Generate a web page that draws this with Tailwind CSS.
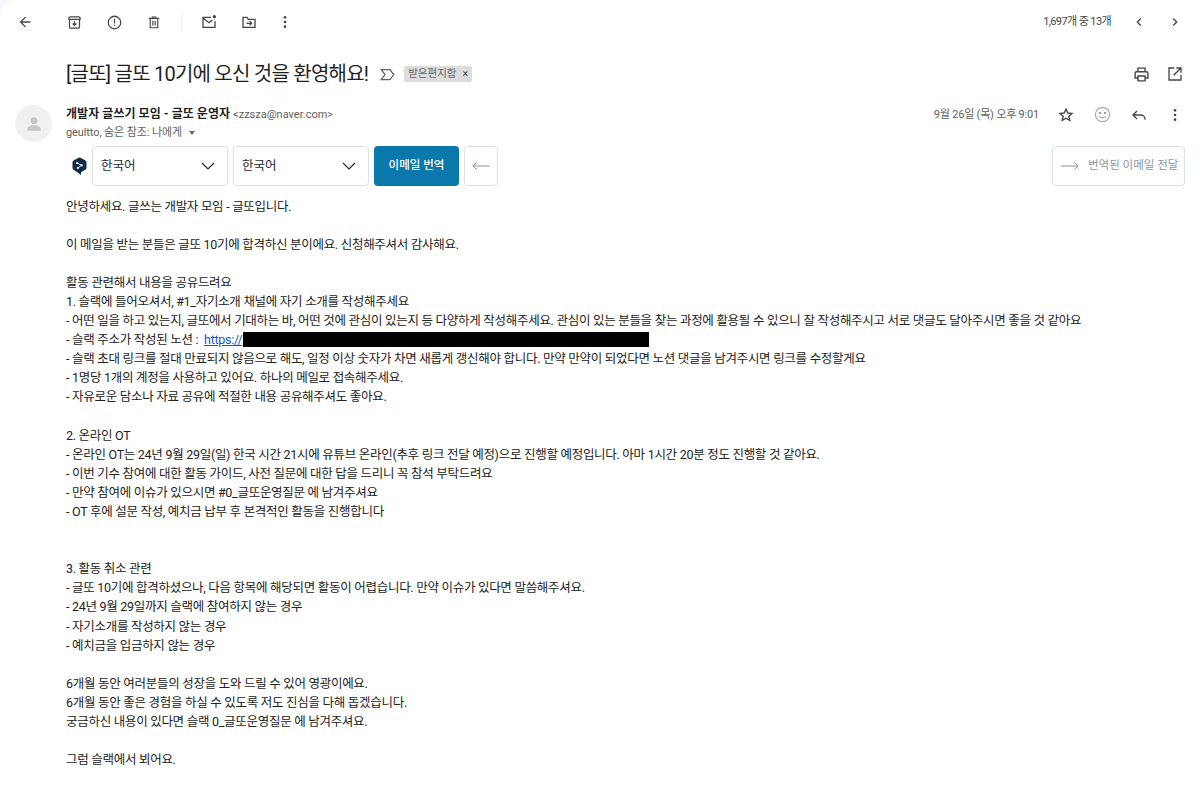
<!DOCTYPE html>
<html lang="ko">
<head>
  <meta charset="UTF-8">
  <meta name="viewport" content="width=device-width, initial-scale=1.0">
  <title>Gmail</title>
  <script src="https://cdn.jsdelivr.net/npm/@tailwindcss/browser@4"></script>
</head>
<body class="bg-[#f6f8fc] overflow-hidden font-['Roboto','Noto_Sans_CJK_KR',sans-serif]">
  <div class="bg-white w-[1200px] h-[789px] rounded-tl-2xl overflow-hidden">

    <!-- Toolbar -->
    <div class="h-[44px] flex items-center text-[#444746]">
      <svg class="ml-[17px] w-[16px] h-[16px]" viewBox="0 0 24 24" fill="#444746"><path d="M20 11H7.830l5.590-5.590L12 4l-8 8 8 8 1.410-1.410L7.830 13H20v-2z"/></svg>
      <svg class="ml-[34px] w-[15px] h-[15px]" viewBox="0 0 24 24" fill="none" stroke="#444746" stroke-width="2"><path d="M3 8V5a2 2 0 0 1 2-2h14a2 2 0 0 1 2 2v3M4 7h16v12a2 2 0 0 1-2 2H6a2 2 0 0 1-2-2z"/><path d="M12 10v6M9 13.500l3 3 3-3"/></svg>
      <svg class="ml-[25px] w-[15px] h-[15px]" viewBox="0 0 24 24" fill="none" stroke="#444746" stroke-width="2"><circle cx="12" cy="12" r="10"/><path d="M12 6.500v7M12 15.500v2"/></svg>
      <svg class="ml-[25px] w-[14px] h-[15px]" viewBox="0 0 24 24" fill="none" stroke="#444746" stroke-width="2"><path d="M3 5h18M9 5V2.500h6V5M5.500 5v16h13V5M10 9v8M14 9v8"/></svg>
      <div class="ml-[20px] w-px h-[20px] bg-[#eceeef]"></div>
      <svg class="ml-[19px] w-[16px] h-[16px]" viewBox="0 0 24 24" fill="none" stroke="#444746" stroke-width="2"><path d="M15 5H3v15h18v-9M3 6l9 7 5-4"/><circle cx="20" cy="4" r="2.500" fill="#444746" stroke="none"/></svg>
      <svg class="ml-[24px] w-[16px] h-[16px]" viewBox="0 0 24 24" fill="none" stroke="#444746" stroke-width="2"><path d="M3 5h6l2 3h10v12H3z"/><path d="M8 14h8M13 11l3 3-3 3"/></svg>
      <svg class="ml-[20px] w-[16px] h-[16px]" viewBox="0 0 24 24" fill="#444746"><circle cx="12" cy="5" r="2"/><circle cx="12" cy="12" r="2"/><circle cx="12" cy="19" r="2"/></svg>
      <span class="ml-auto text-[11px] text-[#444746] tracking-[-0.6px]">1,697개 중 13개</span>
      <svg class="ml-[20px] w-[16px] h-[16px]" viewBox="0 0 24 24" fill="#444746"><path d="M15.400 7.400 14 6l-6 6 6 6 1.400-1.400L10.800 12z"/></svg>
      <svg class="ml-[20px] mr-[17px] w-[16px] h-[16px]" viewBox="0 0 24 24" fill="#444746"><path d="M8.600 7.400 10 6l6 6-6 6-1.400-1.400 4.600-4.600z"/></svg>
    </div>

    <!-- Subject -->
    <div class="h-[60px] flex items-center pl-[66px]">
      <h1 class="text-[20px] text-[#1f1f1f] font-normal tracking-[-0.77px]">[글또] 글또 10기에 오신 것을 환영해요!</h1>
      <svg class="ml-[12px] w-[15px] h-[15px]" viewBox="0 0 24 24" fill="none" stroke="#5f6368" stroke-width="2"><path d="M2 4h14l6 8-6 8H2l6-8z"/></svg>
      <span class="ml-[9px] h-[16px] px-[4px] bg-[#dddddd] rounded-[2px] flex items-center text-[10.500px] text-[#666666]">받은편지함<span class="ml-[6px] text-[#444746]">×</span></span>
      <svg class="ml-auto w-[17px] h-[17px]" viewBox="0 0 24 24" fill="none" stroke="#444746" stroke-width="2"><path d="M7 8V3h10v5M7 17H3v-7a2 2 0 0 1 2-2h14a2 2 0 0 1 2 2v7h-4M7 14h10v7H7z"/></svg>
      <svg class="ml-[17px] mr-[17px] w-[16px] h-[16px]" viewBox="0 0 24 24" fill="none" stroke="#444746" stroke-width="2"><path d="M11 3H3v18h18v-8M14 3h7v7M21 3 10 14"/></svg>
    </div>

    <!-- Sender -->
    <div class="h-[38px] flex pl-[15px]">
      <div class="mt-[1px] w-[37px] h-[37px] rounded-full bg-[#f0f0f0] flex items-center justify-center">
        <svg class="w-[20px] h-[20px]" viewBox="0 0 24 24" fill="#c4c7c9"><circle cx="12" cy="8" r="4"/><path d="M4 20v-2c0-3 5-4.500 8-4.500s8 1.500 8 4.500v2z"/></svg>
      </div>
      <div class="ml-[14px]">
        <div class="text-[12px] leading-[18px] text-[#1f1f1f] mt-[1px]"><b class="font-bold tracking-[0.05px]">개발자 글쓰기 모임 - 글또 운영자</b> <span class="text-[11px] text-[#5e5e5e]">&lt;zzsza@naver.com&gt;</span></div>
        <div class="text-[11px] leading-[18px] text-[#5e5e5e] flex items-center tracking-[-0.1px]">geultto, 숨은 참조: 나에게<span class="ml-[7px] border-x-[3.500px] border-t-[4px] border-x-transparent border-t-[#666666]"></span></div>
      </div>
      <span class="ml-auto mt-[2px] text-[11px] leading-[18px] text-[#5e5e5e] tracking-[-0.2px]">9월 26일 (목) 오후 9:01</span>
      <svg class="ml-[19px] mt-[3px] w-[16px] h-[16px]" viewBox="0 0 24 24" fill="none" stroke="#444746" stroke-width="2"><path d="m12 3 2.700 6 6.300.600-4.800 4.200 1.500 6.400L12 16.800 6.300 20.200l1.500-6.400L3 9.600 9.300 9z"/></svg>
      <svg class="ml-[20px] mt-[2px] w-[17px] h-[17px]" viewBox="0 0 24 24" fill="none" stroke="#9aa0a6" stroke-width="1.500"><circle cx="12" cy="12" r="10"/><circle cx="8.500" cy="10" r="1" fill="#9aa0a6"/><circle cx="15.500" cy="10" r="1" fill="#9aa0a6"/><path d="M7.500 14.500c2 3 7 3 9 0"/></svg>
      <svg class="ml-[20px] mt-[3px] w-[16px] h-[16px]" viewBox="0 0 24 24" fill="none" stroke="#444746" stroke-width="2"><path d="M9 6 3 12l6 6M3 12h12a6 6 0 0 1 6 6v1"/></svg>
      <svg class="ml-[20px] mr-[17px] mt-[3px] w-[16px] h-[16px]" viewBox="0 0 24 24" fill="#444746"><circle cx="12" cy="5" r="2"/><circle cx="12" cy="12" r="2"/><circle cx="12" cy="19" r="2"/></svg>
    </div>

    <!-- Translate bar -->
    <div class="flex items-center h-[40px] mt-[4px] pl-[72px] pr-[15px] text-[12.500px]">
      <svg class="w-[15px] h-[18px]" viewBox="0 0 15 18"><path d="M6.500 .800a2 2 0 0 1 2 0l5 2.700a2 2 0 0 1 1 1.700v5.600a2 2 0 0 1-1 1.700L9 15.200V18l-3-2.300-4.500-3a2 2 0 0 1-1-1.700V5.200a2 2 0 0 1 1-1.700z" fill="#0f2b46"/><path d="M5 6 9.500 8.200 6 11" fill="none" stroke="#fff" stroke-width=".9"/><circle cx="5" cy="6" r="1.100" fill="#fff"/><circle cx="9.800" cy="8.300" r="1.100" fill="#fff"/><circle cx="5.800" cy="11" r="1.100" fill="#fff"/></svg>
      <div class="ml-[5px] w-[136px] h-[40px] border border-[#dae1e8] rounded-[4px] flex items-center justify-between pl-[8px] pr-[12px] text-[#1f2937]">한국어
        <svg class="w-[14px] h-[8px]" viewBox="0 0 14 8" fill="none" stroke="#1f2937" stroke-width="1.200"><path d="m1 1 6 6 6-6"/></svg>
      </div>
      <div class="ml-[5px] w-[136px] h-[40px] border border-[#dae1e8] rounded-[4px] flex items-center justify-between pl-[8px] pr-[12px] text-[#1f2937]">한국어
        <svg class="w-[14px] h-[8px]" viewBox="0 0 14 8" fill="none" stroke="#1f2937" stroke-width="1.200"><path d="m1 1 6 6 6-6"/></svg>
      </div>
      <div class="ml-[5px] w-[85px] h-[40px] bg-[#0a78ab] rounded-[4px] flex items-center justify-center text-white text-[11.500px] font-medium">이메일 번역</div>
      <div class="ml-[5px] w-[34px] h-[40px] border border-[#dae1e8] rounded-[4px] flex items-center justify-center">
        <svg class="w-[18px] h-[8px]" viewBox="0 0 18 8" fill="none" stroke="#8b96a3"><path d="M18 4H1M4.500 .500 1 4l3.500 3.500"/></svg>
      </div>
      <div class="ml-auto w-[133px] h-[40px] border border-[#dae1e8] rounded-[4px] flex items-center pl-[8px] text-[#8b96a3] text-[11.500px]">
        <svg class="w-[18px] h-[8px] mr-[9px]" viewBox="0 0 18 8" fill="none" stroke="#8b96a3"><path d="M0 4h17M13.500 .500 17 4l-3.500 3.500"/></svg>번역된 이메일 전달
      </div>
    </div>

    <!-- Body -->
    <div class="mt-[10.500px] pl-[66px] text-[12.500px] leading-[19.100px] text-[#222222] tracking-[-0.28px] whitespace-nowrap">
      <p>안녕하세요. 글쓰는 개발자 모임 - 글또입니다.</p>
      <p class="mt-[19.100px]">이 메일을 받는 분들은 글또 10기에 합격하신 분이에요. 신청해주셔서 감사해요.</p>
      <p class="mt-[19.100px]">활동 관련해서 내용을 공유드려요</p>
      <p>1. 슬랙에 들어오셔서, #1_자기소개 채널에 자기 소개를 작성해주세요</p>
      <p>- 어떤 일을 하고 있는지, 글또에서 기대하는 바, 어떤 것에 관심이 있는지 등 다양하게 작성해주세요. 관심이 있는 분들을 찾는 과정에 활용될 수 있으니 잘 작성해주시고 서로 댓글도 달아주시면 좋을 것 같아요</p>
      <p class="flex items-center">- 슬랙 주소가 작성된 노션 :&nbsp;<a class="ml-[3px] text-[#1155cc] underline">https://</a><span class="ml-[1px] w-[406px] h-[15px] bg-black"></span></p>
      <p>- 슬랙 초대 링크를 절대 만료되지 않음으로 해도, 일정 이상 숫자가 차면 새롭게 갱신해야 합니다. 만약 만약이 되었다면 노션 댓글을 남겨주시면 링크를 수정할게요</p>
      <p>- 1명당 1개의 계정을 사용하고 있어요. 하나의 메일로 접속해주세요.</p>
      <p>- 자유로운 담소나 자료 공유에 적절한 내용 공유해주셔도 좋아요.</p>
      <p class="mt-[19.100px]">2. 온라인 OT</p>
      <p>- 온라인 OT는 24년 9월 29일(일) 한국 시간 21시에 유튜브 온라인(추후 링크 전달 예정)으로 진행할 예정입니다. 아마 1시간 20분 정도 진행할 것 같아요.</p>
      <p>- 이번 기수 참여에 대한 활동 가이드, 사전 질문에 대한 답을 드리니 꼭 참석 부탁드려요</p>
      <p>- 만약 참여에 이슈가 있으시면 #0_글또운영질문 에 남겨주셔요</p>
      <p>- OT 후에 설문 작성, 예치금 납부 후 본격적인 활동을 진행합니다</p>
      <p class="mt-[38.200px]">3. 활동 취소 관련</p>
      <p>- 글또 10기에 합격하셨으나, 다음 항목에 해당되면 활동이 어렵습니다. 만약 이슈가 있다면 말씀해주셔요.</p>
      <p>- 24년 9월 29일까지 슬랙에 참여하지 않는 경우</p>
      <p>- 자기소개를 작성하지 않는 경우</p>
      <p>- 예치금을 입금하지 않는 경우</p>
      <p class="mt-[19.100px]">6개월 동안 여러분들의 성장을 도와 드릴 수 있어 영광이에요.</p>
      <p>6개월 동안 좋은 경험을 하실 수 있도록 저도 진심을 다해 돕겠습니다.</p>
      <p>궁금하신 내용이 있다면 슬랙 0_글또운영질문 에 남겨주셔요.</p>
      <p class="mt-[19.100px]">그럼 슬랙에서 뵈어요.</p>
    </div>
  </div>
</body>
</html>
